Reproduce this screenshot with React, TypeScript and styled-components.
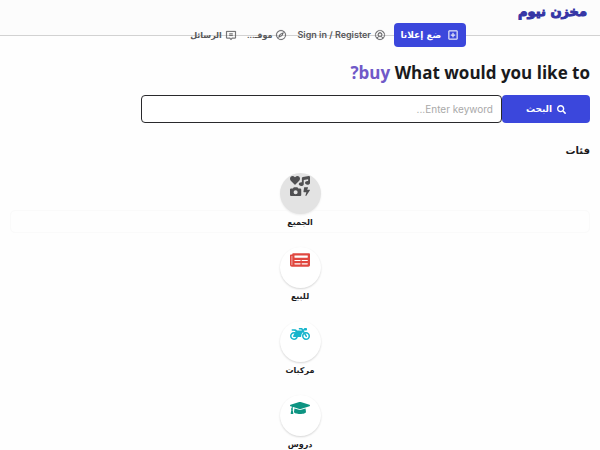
import React from "react";
import styled, { createGlobalStyle } from "styled-components";
import { FaSearch, FaIcons, FaNewspaper, FaMotorcycle, FaGraduationCap } from "react-icons/fa";
import { PiChatCenteredText, PiCompass, PiUserCircle, PiPlusSquare } from "react-icons/pi";

const GlobalStyle = createGlobalStyle`
  *, *::before, *::after { box-sizing: border-box; }
  body {
    margin: 0;
    background: #fefefe;
    color: #1a1a1c;
    font-family: Inter, "DejaVu Sans", sans-serif;
    font-size: 9px;
    overflow: hidden;
  }
`;

const Header = styled.header`
  height: 36px;
  background: #fcfcfc;
  border-bottom: 1px solid #d2d2d2;
`;

const LogoRow = styled.div`
  display: flex;
  height: 23px;
  padding: 0 13px;
`;

const Logo = styled.a`
  color: #3535a5;
  font: bold 13px/24px "DejaVu Sans", sans-serif;
  -webkit-text-stroke: 1px #3535a5;
  text-decoration: none;
  white-space: nowrap;
`;

const Nav = styled.nav`
  display: flex;
  align-items: center;
  justify-content: center;
  gap: 10px;
  padding-left: 56px;
`;

const NavLink = styled.a`
  display: flex;
  align-items: center;
  gap: 3px;
  color: #58585a;
  font-size: 9px;
  font-weight: 600;
  line-height: 16px;
  text-decoration: none;
  white-space: nowrap;

  &:lang(ar) { font-size: 8px; }
  svg { width: 12px; height: 12px; stroke: currentColor; stroke-width: 4px; }
`;

const PostButton = styled.button`
  display: flex;
  align-items: center;
  justify-content: center;
  gap: 6px;
  width: 72px;
  height: 24px;
  margin-left: -2px;
  padding: 0;
  border: 0;
  border-radius: 4px;
  background: #3b47dc;
  color: #fff;
  font: bold 9px/16px "DejaVu Sans", sans-serif;
  white-space: nowrap;

  svg { width: 12px; height: 12px; stroke: currentColor; stroke-width: 6px; }
`;

const Main = styled.main`
  padding: 25px 10px 0;
`;

const Heading = styled.h1`
  margin: 0;
  font-family: "Open Sans", sans-serif;
  font-size: 17px;
  font-weight: 700;
  line-height: 24px;
`;

const Accent = styled.span`
  display: inline-block;
  color: #7059c8;
`;

const SearchForm = styled.form`
  display: flex;
  width: calc(80% - 15px);
  min-width: 280px;
  max-width: 700px;
  height: 28px;
  margin-top: 10px;
`;

const SearchButton = styled.button`
  display: flex;
  align-items: center;
  justify-content: center;
  gap: 5px;
  flex: 0 0 88px;
  padding: 0;
  border: 0;
  border-radius: 4px;
  background: #3b47dc;
  color: #fff;
  font: bold 9px/16px "DejaVu Sans", sans-serif;

  svg { width: 9px; height: 9px; }
`;

const SearchInput = styled.input`
  flex: 1;
  min-width: 0;
  padding: 0 8px;
  border: 1px solid #29292c;
  border-radius: 4px;
  outline: 0;
  background: #fff;
  font: 10px/16px Inter, "DejaVu Sans", sans-serif;

  &::placeholder { color: #a9a9a9; opacity: 1; }
`;

const SectionTitle = styled.h2`
  margin: 20px 0 0;
  font: bold 10px/16px "DejaVu Sans", sans-serif;
`;

const CategoryList = styled.ul`
  display: grid;
  gap: 16px;
  margin: 14px 0 0;
  padding: 0;
  list-style: none;
`;

const CategoryItem = styled.li<{ $selected?: boolean }>`
  position: relative;

  &::before {
    content: "";
    display: ${({ $selected }) => ($selected ? "block" : "none")};
    position: absolute;
    inset: 37px 0 -2px;
    border: 1px solid #fafafa;
    border-radius: 5px;
  }
`;

const CategoryLink = styled.a`
  position: relative;
  display: flex;
  flex-direction: column;
  align-items: center;
  color: #1a1a1c;
  text-decoration: none;
`;

const Disc = styled.span<{ $color: string; $selected?: boolean }>`
  display: flex;
  justify-content: center;
  width: 41px;
  height: 41px;
  padding-top: 3px;
  border-radius: 50%;
  background: ${({ $selected }) => ($selected ? "#e3e3e3" : "#fff")};
  box-shadow: 0 1px 2px ${({ $selected }) => ($selected ? "#ececec" : "#d6d6d6")};
  color: ${({ $color }) => $color};

  svg { width: 20px; height: 20px; }
`;

const CategoryName = styled.span`
  font: bold 8px/17px "DejaVu Sans", sans-serif;
`;

const categories = [
  { name: "الجميع", color: "#505052", Icon: FaIcons, selected: true },
  { name: "للبيع", color: "#e04840", Icon: FaNewspaper },
  { name: "مركبات", color: "#16b5cc", Icon: FaMotorcycle },
  { name: "دروس", color: "#0d9482", Icon: FaGraduationCap },
];

export default function App() {
  return (
    <div dir="rtl" lang="ar">
      <GlobalStyle />
      <Header>
        <LogoRow>
          <Logo href="#">مخزن نيوم</Logo>
        </LogoRow>
        <Nav>
          <PostButton type="button"><PiPlusSquare />ضع إعلانا</PostButton>
          <NavLink href="#" lang="en"><PiUserCircle />Sign in / Register</NavLink>
          <NavLink href="#"><PiCompass />موقـ...</NavLink>
          <NavLink href="#"><PiChatCenteredText />الرسائل</NavLink>
        </Nav>
      </Header>
      <Main>
        <Heading>What would you like to <Accent>buy?</Accent></Heading>
        <SearchForm onSubmit={(event) => event.preventDefault()}>
          <SearchButton type="submit"><FaSearch />البحث</SearchButton>
          <SearchInput type="text" aria-label="Enter keyword" placeholder="Enter keyword..." />
        </SearchForm>
        <SectionTitle>فئات</SectionTitle>
        <CategoryList>
          {categories.map(({ name, color, Icon, selected }) => (
            <CategoryItem key={name} $selected={selected}>
              <CategoryLink href="#">
                <Disc $color={color} $selected={selected}><Icon /></Disc>
                <CategoryName>{name}</CategoryName>
              </CategoryLink>
            </CategoryItem>
          ))}
        </CategoryList>
      </Main>
    </div>
  );
}
